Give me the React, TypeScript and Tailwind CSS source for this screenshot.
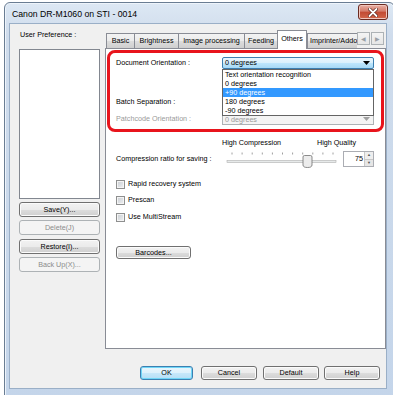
import React from "react";

function Btn({
  label,
  className,
  disabled,
  def,
}: {
  label: string;
  className: string;
  disabled?: boolean;
  def?: boolean;
}) {
  let look =
    "border-[#707070] bg-[linear-gradient(#f2f2f2,#ebebeb_50%,#dddddd_51%,#cfcfcf)] shadow-[inset_0_0_0_1px_#fbfbfb] text-black";
  if (disabled)
    look = "border-[#adb2b5] bg-[#f4f4f4] text-[#8b8b8b]";
  if (def)
    look =
      "border-[#3c7fb1] bg-[linear-gradient(#eaf6fd,#dcf1fc_50%,#c6e8fa_51%,#b5def6)] shadow-[inset_0_0_0_1px_#6fd6f7] text-black";
  return (
    <div
      className={`flex items-center justify-center rounded-[3px] border text-[7.2px] leading-none ${look} ${className}`}
    >
      {label}
    </div>
  );
}

function Check({ label }: { label: string }) {
  return (
    <div className="flex h-[10px] items-center">
      <div className="h-[9px] w-[9px] border border-[#8e8f8f] bg-[linear-gradient(135deg,#c9cdd2,#eef0f2)] shadow-[inset_0_0_0_1px_#f4f4f4]" />
      <span className="ml-[3px] text-[7.2px] leading-none">{label}</span>
    </div>
  );
}

function Tab({
  label,
  className,
  selected,
}: {
  label: string;
  className: string;
  selected?: boolean;
}) {
  return (
    <div
      className={`flex items-center justify-center overflow-hidden whitespace-nowrap border-t border-l border-[#898c95] text-[7.2px] leading-none ${
        selected
          ? "relative z-10 mb-[-1px] h-[19px] border-r bg-white pb-[3px]"
          : "h-[15px] bg-[linear-gradient(#f3f3f3,#ebebeb_50%,#dddddd_51%,#cfcfcf)]"
      } ${className}`}
    >
      {label}
    </div>
  );
}

function Arrow({ color = "#000" }: { color?: string }) {
  return (
    <svg width="7" height="4" viewBox="0 0 7 4">
      <path d="M0 0 H7 L3.5 4 Z" fill={color} />
    </svg>
  );
}

export default function App() {
  return (
    <div className="h-[395px] w-[393px] overflow-hidden bg-white font-['Liberation_Sans',Arial,sans-serif] text-black">
      {/* window */}
      <div className="ml-[4px] mt-[2px] flex h-[400px] w-[391px] flex-col rounded-t-[6px] border border-[#6a7d93] bg-[linear-gradient(#dde8f4,#cfdcec_8%,#c4d5ea)] shadow-[inset_0_0_0_1px_#eef4fb]">
        {/* title bar */}
        <div className="flex h-[20px] items-center">
          <span className="ml-[7px] mt-[2px] text-[8.7px] leading-none text-black">
            Canon DR-M1060 on STI - 0014
          </span>
          <div className="ml-auto mr-[6px] mt-[-2px] flex h-[16px] w-[30px] items-center justify-center rounded-[3px] border border-[#6b2a20] bg-[linear-gradient(#eab1a6,#d47a68_45%,#c24a33_50%,#d2674b)] shadow-[inset_0_0_0_1px_#f0c6bd]">
            <svg width="10" height="9" viewBox="0 0 10 9">
              <path
                d="M1.5 1 L8.5 8 M8.5 1 L1.5 8"
                stroke="#5a2018"
                strokeWidth="3.2"
                strokeLinecap="round"
              />
              <path
                d="M1.5 1 L8.5 8 M8.5 1 L1.5 8"
                stroke="#ffffff"
                strokeWidth="1.8"
                strokeLinecap="round"
              />
            </svg>
          </div>
        </div>

        {/* client */}
        <div className="ml-[4px] flex h-[366px] w-[378px] flex-col border border-[#9aafc7] bg-[#f0f0f0]">
          <div className="flex pt-[6px]">
            {/* left column */}
            <div className="ml-[9px] flex w-[81px] flex-col">
              <div className="flex h-[10px] items-center pl-[1px] text-[7.2px] leading-none">
                User Preference :
              </div>
              <div className="mt-[9px] h-[150px] border border-[#828790] bg-white" />
              <Btn label="Save(Y)..." className="mt-[3px] h-[15px]" />
              <Btn label="Delete(J)" className="mt-[3px] h-[15px]" disabled />
              <Btn label="Restore(I)..." className="mt-[4px] h-[15px]" />
              <Btn label="Back Up(X)..." className="mt-[3px] h-[15px]" disabled />
            </div>

            {/* tab control */}
            <div className="ml-[5px] flex w-[281px] flex-col">
              <div className="flex h-[18px] items-end">
                <Tab label="Basic" className="ml-[1px] w-[28px]" />
                <Tab label="Brightness" className="w-[44px]" />
                <Tab label="Image processing" className="w-[66px]" />
                <Tab label="Feeding" className="w-[33px]" />
                <Tab label="Others" className="w-[30px]" selected />
                <Tab
                  label="Imprinter/Addo"
                  className="w-[50px] justify-start pl-[2px]"
                />
                <div className="mb-[3px] flex">
                  <div className="flex h-[13px] w-[13px] items-center justify-center border border-[#adb2b5] bg-[linear-gradient(#f4f4f4,#e6e6e6)] text-[6px] leading-none text-[#9aa0a6]">
                    ◀
                  </div>
                  <div className="ml-[1px] flex h-[13px] w-[13px] items-center justify-center border border-[#adb2b5] bg-[linear-gradient(#f4f4f4,#e6e6e6)] text-[6px] leading-none text-[#9aa0a6]">
                    ▶
                  </div>
                </div>
              </div>

              {/* panel */}
              <div className="relative h-[301px] border border-[#898c95] bg-white">
                <div className="flex flex-col pl-[10px] pt-[8px] text-[7.2px] leading-none">
                  {/* Document orientation */}
                  <div className="flex h-[12px] items-center">
                    <div className="w-[106px]">Document Orientation :</div>
                    <div className="flex h-[12px] w-[152px] items-center rounded-[2px] border border-[#3c7fb1] bg-[linear-gradient(#eaf6fd,#d9f0fc_50%,#bee6fd_51%,#a7d9f5)] pl-[2px]">
                      <span>0 degrees</span>
                      <div className="ml-auto mr-[3px] flex items-center">
                        <Arrow />
                      </div>
                    </div>
                  </div>
                  {/* Batch separation */}
                  <div className="mt-[27px] flex h-[12px] items-center">
                    <div className="w-[106px]">Batch Separation :</div>
                    <div className="h-[12px] w-[152px] border border-[#adb2b5] bg-[#f0f0f0]" />
                  </div>
                  {/* Patchcode */}
                  <div className="mt-[5px] flex h-[12px] items-center text-[#9a9a9a]">
                    <div className="w-[106px]">Patchcode Orientation :</div>
                    <div className="flex h-[12px] w-[152px] items-center border border-[#adb2b5] bg-[#f4f4f4] pl-[2px]">
                      <span className="mt-[1px]">0 degrees</span>
                      <div className="ml-auto mr-[3px] flex items-center">
                        <Arrow color="#a0a0a0" />
                      </div>
                    </div>
                  </div>
                  {/* High labels */}
                  <div className="mt-[13px] flex h-[10px] items-center">
                    <div className="ml-[106px] w-[95px]">High Compression</div>
                    <div>High Quality</div>
                  </div>
                  {/* Compression row */}
                  <div className="mt-[3px] flex h-[16px] items-center">
                    <div className="w-[106px]">Compression ratio for saving :</div>
                    <svg width="112" height="16" viewBox="0 0 112 16" className="ml-[4px] mt-[2px] overflow-visible">
                      {[0, 1, 2, 3, 4, 5, 6, 7, 8, 9, 10].map((i) => (
                        <line
                          key={i}
                          x1={6 + i * 10.1}
                          x2={6 + i * 10.1}
                          y1={0.5}
                          y2={2.5}
                          stroke="#a0a0a0"
                          strokeWidth="1"
                        />
                      ))}
                      <rect x="1" y="8.5" width="109" height="2" fill="#e7eaea" stroke="#b0b0b0" strokeWidth="0.6" />
                      <path
                        d="M78.5 3.5 h6 q1.5 0 1.5 1.5 v8 q0 2.5 -4.5 2.5 q-4.5 0 -4.5 -2.5 v-8 q0 -1.5 1.5 -1.5 z"
                        fill="#ececec"
                        stroke="#707070"
                        strokeWidth="0.8"
                      />
                    </svg>
                    <div className="ml-[5px] flex h-[16px] w-[31px] border border-[#abadb3] bg-white">
                      <div className="flex flex-1 items-center justify-end pr-[1px]">75</div>
                      <div className="flex w-[9px] flex-col border-l border-[#c8c8c8]">
                        <div className="flex flex-1 items-center justify-center border-b border-[#c8c8c8] bg-[#eeeeee] text-[4px] text-[#555]">▲</div>
                        <div className="flex flex-1 items-center justify-center bg-[#e6e6e6] text-[4px] text-[#555]">▼</div>
                      </div>
                    </div>
                  </div>
                  {/* checkboxes */}
                  <div className="mt-[12px]">
                    <Check label="Rapid recovery system" />
                  </div>
                  <div className="mt-[6px]">
                    <Check label="Prescan" />
                  </div>
                  <div className="mt-[7px]">
                    <Check label="Use MultiStream" />
                  </div>
                  <Btn label="Barcodes..." className="mt-[24px] h-[13px] w-[75px]" />
                </div>

                {/* dropdown list overlay */}
                <div className="absolute left-[116px] top-[20px] flex h-[47px] w-[152px] flex-col border border-[#646464] bg-white text-[7.2px] leading-none">
                  <div className="flex h-[9px] items-center pl-[2px]">Text orientation recognition</div>
                  <div className="flex h-[9px] items-center pl-[2px]">0 degrees</div>
                  <div className="flex h-[9px] items-center bg-[#3399ff] pl-[2px] text-white">+90 degrees</div>
                  <div className="flex h-[9px] items-center pl-[2px]">180 degrees</div>
                  <div className="flex h-[9px] items-center pl-[2px]">-90 degrees</div>
                </div>

                {/* red annotation */}
                <div className="pointer-events-none absolute left-[1px] top-[1px] h-[82px] w-[277px] rounded-[8px] border-[3px] border-[#e8141c]" />
              </div>
            </div>
          </div>

          {/* bottom buttons */}
          <div className="mt-[17px] flex justify-end pr-[6px]">
            <Btn label="OK" className="h-[14px] w-[53px]" def />
            <Btn label="Cancel" className="ml-[8px] h-[14px] w-[56px]" />
            <Btn label="Default" className="ml-[6px] h-[14px] w-[56px]" />
            <Btn label="Help" className="ml-[5px] h-[14px] w-[56px]" />
          </div>
        </div>
      </div>
    </div>
  );
}
